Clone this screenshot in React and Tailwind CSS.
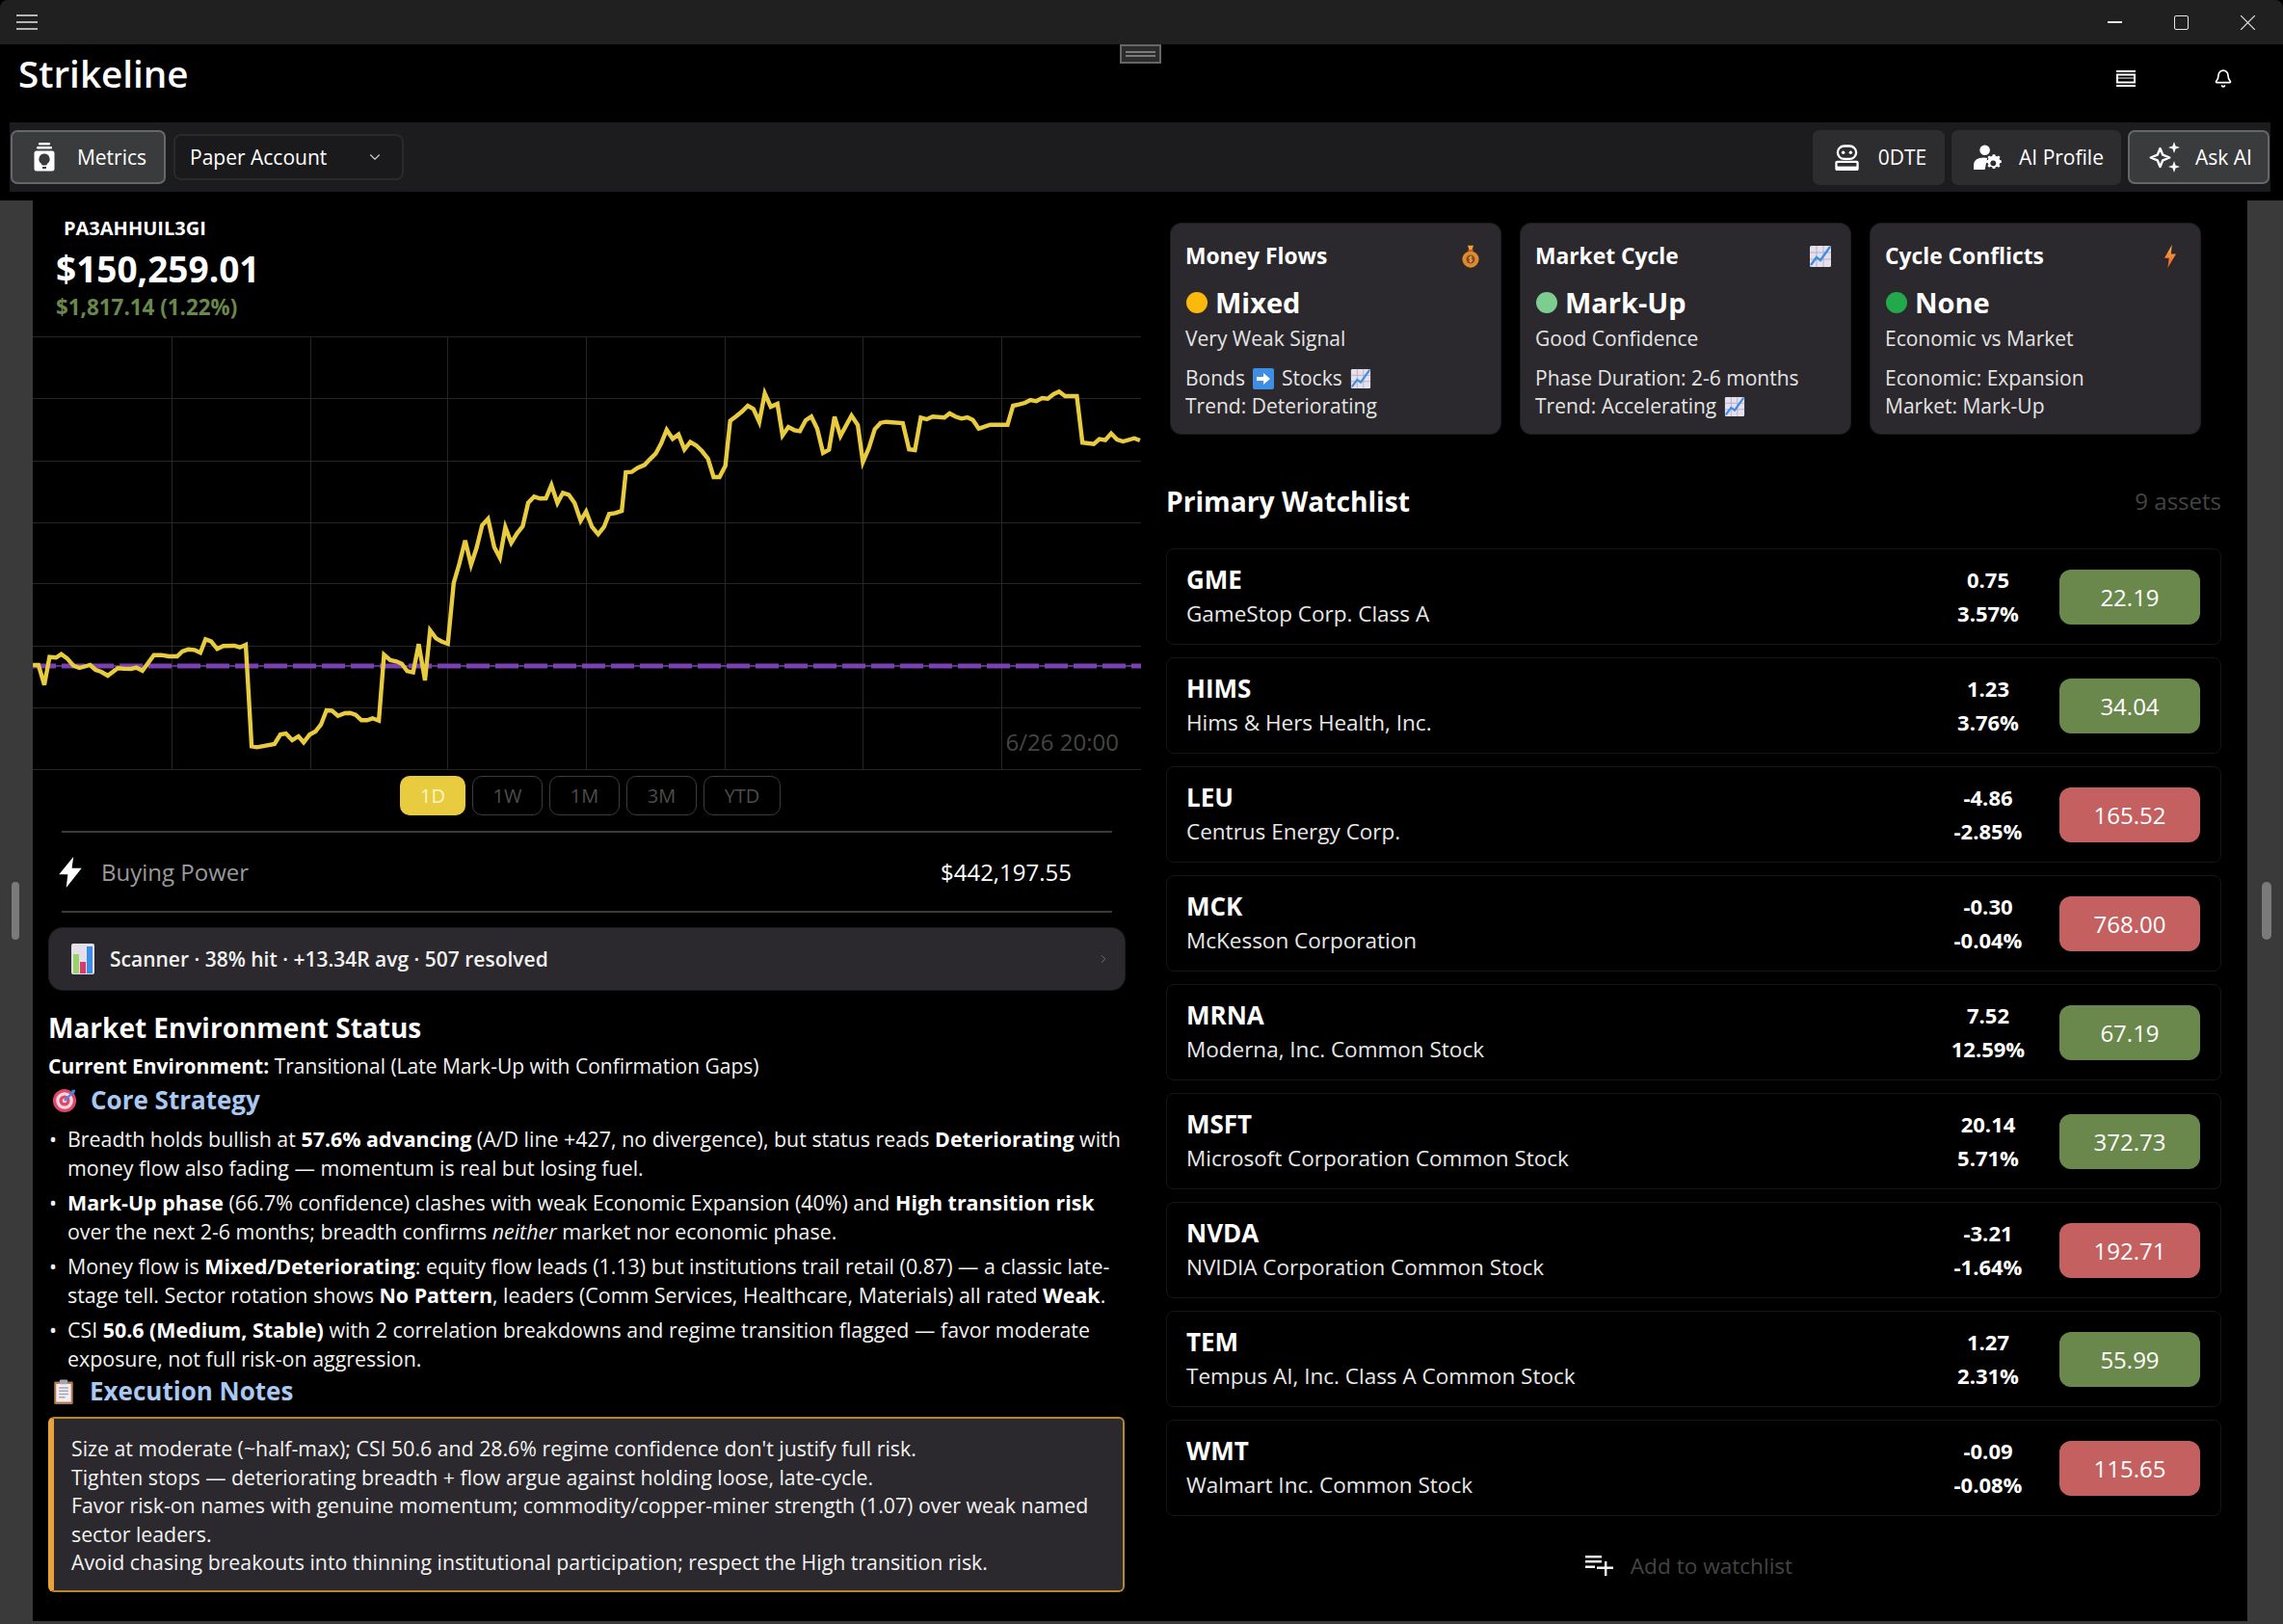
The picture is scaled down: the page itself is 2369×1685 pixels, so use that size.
import { ChevronDown, ChevronRight, Bell } from "lucide-react";

const FONT = "font-['Open_Sans','Noto_Sans',sans-serif]";

const leftPts = [[37,1050],[52,1050],[68,1112],[82,1025],[100,1027],[114,1016],[130,1030],[147,1052],[163,1059],[192,1050],[207,1065],[222,1071],[240,1083],[267,1060],[283,1061],[303,1062],[318,1058],[334,1068],[365,1019],[385,1019],[405,1023],[428,1023],[442,1008],[458,1001],[475,1003],[491,1012],[505,970],[520,976],[537,1000],[553,991],[583,990],[598,995],[614,987],[630,1303],[645,1306],[692,1296],[708,1266],[723,1263],[740,1284],[757,1272],[771,1291],[787,1267],[803,1257],[818,1235],[833,1191],[848,1192],[864,1208],[883,1200],[897,1199],[912,1205],[928,1222],[943,1222],[958,1216],[975,1223],[989,1018],[1006,1035],[1023,1039],[1037,1046],[1052,1069],[1068,1073],[1083,985],[1100,1098],[1114,942],[1130,967],[1146,977],[1162,984],[1178,795],[1193,735],[1209,662],[1225,738],[1240,685],[1255,615],[1271,595],[1288,683],[1303,716],[1318,621],[1334,670],[1350,640],[1365,618],[1380,545],[1396,526],[1412,532],[1428,531],[1443,490],[1459,546],[1474,514],[1490,520],[1506,546],[1522,601],[1537,572],[1553,620]];
const rightPts = [[54,643],[70,620],[84,580],[100,577],[118,570],[129,450],[145,449],[160,437],[180,427],[195,409],[210,392],[225,360],[240,318],[256,346],[272,332],[288,379],[304,356],[320,367],[336,385],[352,408],[367,465],[383,465],[399,430],[412,290],[428,276],[444,261],[460,243],[475,253],[491,293],[506,205],[522,246],[540,237],[554,335],[570,309],[586,319],[601,322],[617,288],[632,277],[648,314],[664,390],[680,380],[695,277],[711,337],[741,274],[758,303],[772,418],[788,375],[804,316],[820,296],[835,293],[880,297],[897,379],[913,381],[929,280],[945,285],[961,277],[993,280],[1007,267],[1023,277],[1039,283],[1055,279],[1070,287],[1086,314],[1117,302],[1164,302],[1179,243],[1195,239],[1211,234],[1226,225],[1242,229],[1258,219],[1273,221],[1289,207],[1304,199],[1320,213],[1352,213],[1367,358],[1398,362],[1413,347],[1429,350],[1445,329],[1461,348],[1477,354],[1508,344],[1523,351]];

const linePts = [
    ...leftPts.map(([x, y]) => [20 + x / 2.613 - 34, (y - 27) / 3]),
    ...rightPts.map(([x, y]) => [600 + x / 2.613 - 34, (y - 27) / 3]),
]
    .map(([x, y]) => `${x.toFixed(1)},${y.toFixed(1)}`)
    .join(" ");

const gridY = [0, 64, 129, 193, 256, 321, 385, 449];
const gridX = [144, 288, 430, 574, 718, 861, 1005];

const watchlist = [
    { s: "GME", n: "GameStop Corp. Class A", c: "0.75", p: "3.57%", v: "22.19", up: true },
    { s: "HIMS", n: "Hims & Hers Health, Inc.", c: "1.23", p: "3.76%", v: "34.04", up: true },
    { s: "LEU", n: "Centrus Energy Corp.", c: "-4.86", p: "-2.85%", v: "165.52", up: false },
    { s: "MCK", n: "McKesson Corporation", c: "-0.30", p: "-0.04%", v: "768.00", up: false },
    { s: "MRNA", n: "Moderna, Inc. Common Stock", c: "7.52", p: "12.59%", v: "67.19", up: true },
    { s: "MSFT", n: "Microsoft Corporation Common Stock", c: "20.14", p: "5.71%", v: "372.73", up: true },
    { s: "NVDA", n: "NVIDIA Corporation Common Stock", c: "-3.21", p: "-1.64%", v: "192.71", up: false },
    { s: "TEM", n: "Tempus AI, Inc. Class A Common Stock", c: "1.27", p: "2.31%", v: "55.99", up: true },
    { s: "WMT", n: "Walmart Inc. Common Stock", c: "-0.09", p: "-0.08%", v: "115.65", up: false },
];

function ChartEmoji({ className }) {
    return (
        <svg viewBox="0 0 24 24" className={className}>
            <rect x="1" y="1" width="22" height="22" rx="1.5" fill="#e6e0ee" />
            <path d="M1 8h22M1 15h22M8 1v22M15 1v22" stroke="#b7aec6" strokeWidth="1" />
            <path d="M2 21l6-8 4 3L22 2" stroke="#3f8fe0" strokeWidth="2.4" fill="none" />
        </svg>
    );
}

function MoneyBag({ className }) {
    return (
        <svg viewBox="0 0 24 32" className={className}>
            <path d="M8 1h8l-2 6h-4z" fill="#f0a43a" />
            <rect x="8.5" y="6.5" width="7" height="2.5" fill="#c9651f" />
            <ellipse cx="12" cy="20" rx="11.5" ry="11.5" fill="#e08a2e" />
            <circle cx="12" cy="20" r="6" fill="#8a4a1c" />
            <path d="M14 17.5c-2-1.2-4-.6-4 .8 0 2.4 4 1 4 3.4 0 1.4-2 1.8-4 .8M12 15.5v9" stroke="#f4c46c" strokeWidth="1.2" fill="none" />
        </svg>
    );
}

function FlashEmoji({ className }) {
    return (
        <svg viewBox="0 0 16 28" className={className}>
            <defs>
                <linearGradient id="flashg" x1="0" y1="0" x2="0" y2="1">
                    <stop offset="0" stopColor="#fbb040" />
                    <stop offset="1" stopColor="#ee5a2a" />
                </linearGradient>
            </defs>
            <path d="M10 0L1 16h5.5L5 28l10-17H9z" fill="url(#flashg)" />
        </svg>
    );
}

function ArrowEmoji({ className }) {
    return (
        <svg viewBox="0 0 22 24" className={className}>
            <rect x="0" y="1" width="22" height="22" rx="2" fill="#3f8ee6" />
            <path d="M4 10h7V6l7 6-7 6v-4H4z" fill="#fff" />
        </svg>
    );
}

function BarsEmoji({ className }) {
    return (
        <svg viewBox="0 0 24 32" className={className}>
            <rect x="0" y="0" width="24" height="32" rx="2" fill="#e4e0ea" />
            <rect x="2" y="11" width="6" height="20" fill="#9ad16a" />
            <rect x="9" y="19" width="6" height="12" fill="#d83c6a" />
            <rect x="16" y="3" width="6" height="28" fill="#3f8ee6" />
        </svg>
    );
}

function TargetEmoji({ className }) {
    return (
        <svg viewBox="0 0 28 28" className={className}>
            <circle cx="14" cy="14" r="13" fill="#e0476a" />
            <circle cx="14" cy="14" r="9.5" fill="#f3d9df" />
            <circle cx="14" cy="14" r="6" fill="#e0476a" />
            <circle cx="14" cy="14" r="2.5" fill="#f3d9df" />
            <path d="M14 14L24 4" stroke="#3f8ee6" strokeWidth="2.4" />
            <path d="M22 2l4 0-1 4-3 1z" fill="#3f8ee6" />
        </svg>
    );
}

function ClipboardEmoji({ className }) {
    return (
        <svg viewBox="0 0 24 32" className={className}>
            <rect x="0" y="3" width="24" height="29" rx="1.5" fill="#b07a52" />
            <rect x="2.5" y="6" width="19" height="23" fill="#f1edf3" />
            <rect x="7" y="0.5" width="10" height="6" rx="1" fill="#a8a4b0" />
            <path d="M6 11h12M6 15h12M6 19h12M6 23h8" stroke="#a8a4b0" strokeWidth="1.8" />
        </svg>
    );
}

function MetricsIcon({ className }) {
    return (
        <svg viewBox="0 0 22 30" className={className} fill="#fff">
            <rect x="5" y="0" width="12" height="2.4" rx="1" />
            <rect x="3" y="4" width="16" height="2.4" rx="1" />
            <path d="M3 8.5h16a2.5 2.5 0 012.5 2.5v16a2.5 2.5 0 01-2.5 2.5H3A2.5 2.5 0 01.5 27V11A2.5 2.5 0 013 8.5z" />
            <path d="M11 11.5a5.6 5.6 0 00-3.2 10.2l1 1.8h4.4l1-1.8A5.6 5.6 0 0011 11.5z" fill="#3a3a3c" />
            <rect x="9" y="25" width="4" height="2" fill="#3a3a3c" />
        </svg>
    );
}

function RobotIcon({ className }) {
    return (
        <svg viewBox="0 0 26 28" className={className} fill="none" stroke="#fff" strokeWidth="2.4">
            <rect x="3" y="1.5" width="20" height="14" rx="7" />
            <circle cx="9" cy="8.5" r="1.8" fill="#fff" stroke="none" />
            <circle cx="17" cy="8.5" r="1.8" fill="#fff" stroke="none" />
            <rect x="1.5" y="18.5" width="23" height="8.5" rx="1" />
            <path d="M1.5 25h23" strokeWidth="3" />
        </svg>
    );
}

function ProfileIcon({ className }) {
    return (
        <svg viewBox="0 0 32 28" className={className} fill="#fff">
            <circle cx="13" cy="6" r="5.5" />
            <path d="M1 27v-5c0-5 4-8 11-8 1.5 0 2.6.2 3.6.5L13 27z" />
            <path d="M22 12.5h3l.5 2.2 1.9.8 2-1.2 2 2-1.2 2 .8 1.9 2 .5v3l-2 .5-.8 1.9 1.2 2-2 2-2-1.2-1.9.8-.5 2h-3l-.5-2-1.9-.8-2 1.2-2-2 1.2-2-.8-1.9-2.2-.5v-3l2.2-.5.8-1.9-1.2-2 2-2 2 1.2 1.9-.8z" transform="translate(2.5 0.5) scale(0.86 0.8)" />
            <circle cx="22" cy="20" r="3" fill="#2d2d2f" />
        </svg>
    );
}

function AskIcon({ className }) {
    return (
        <svg viewBox="0 0 32 32" className={className} fill="none" stroke="#fff">
            <path d="M11.5 7l2.8 6.7 7 2.8-7 2.8-2.8 6.7-2.8-6.7-7-2.8 7-2.8z" strokeWidth="2.4" strokeLinejoin="round" />
            <path d="M26 0l1.5 4.5L32 6l-4.5 1.5L26 12l-1.5-4.5L20 6l4.5-1.5z" fill="#fff" stroke="none" />
            <path d="M26 20l1.5 4.5L32 26l-4.5 1.5L26 32l-1.5-4.5L20 26l4.5-1.5z" fill="#fff" stroke="none" />
        </svg>
    );
}

function TabletIcon({ className }) {
    return (
        <svg viewBox="0 0 20 17" className={className} fill="none" stroke="#fff" strokeWidth="2">
            <path d="M0 1h20M0 16h20" />
            <rect x="1" y="4.5" width="18" height="8" />
            <path d="M2 8h16" strokeWidth="1" />
        </svg>
    );
}

function BoltIcon({ className }) {
    return (
        <svg viewBox="0 0 24 30" className={className} fill="#fff">
            <path d="M15 0L1 17h8.5L8 30l15-19h-9.5z" />
        </svg>
    );
}

function AddListIcon({ className }) {
    return (
        <svg viewBox="0 0 29 21" className={className} fill="#fff">
            <rect x="0" y="0" width="17" height="2.4" />
            <rect x="0" y="5" width="17" height="2.4" />
            <rect x="0" y="10.5" width="10" height="2.4" />
            <rect x="12" y="11.5" width="17" height="2.4" />
            <rect x="20" y="6" width="2.4" height="15" />
        </svg>
    );
}

function ToolButton({ icon, label, active, w, gap }) {
    return (
        <div className={`flex items-center justify-center rounded-[7px] pl-[4px] text-[21px] text-white ${gap} ${active ? "h-[56px] border-2 border-[#66676a] bg-[#3a3b3d]" : "h-[57px] bg-[#2d2d2f]"} ${w}`}>
            {icon}
            <span className="pt-[1px]">{label}</span>
        </div>
    );
}

function InfoCard({ title, icon, dot, status, sub, lines }) {
    return (
        <div className="h-[218px] w-[342px] rounded-[11px] bg-[#2b292d] px-[15px] pt-[21px] shadow-[0_0_0_1px_#1d1c1f]">
            <div className="flex h-[26px] items-center justify-between">
                <span className="text-[22.8px] font-bold text-white">{title}</span>
                {icon}
            </div>
            <div className="mt-[18px] flex h-[34px] items-center gap-[8px]">
                <span className={`ml-[1px] h-[22px] w-[22px] rounded-full ${dot}`} />
                <span className="text-[29px] font-bold text-white">{status}</span>
            </div>
            <div className="mt-[6px] text-[21px] leading-[29px] text-[#e4e4e4]">{sub}</div>
            <div className="mt-[12px] text-[21px] leading-[29px] text-[#e4e4e4]">{lines}</div>
        </div>
    );
}

function WatchRow({ r }) {
    return (
        <div className="flex h-[100px] items-center rounded-[8px] border border-[#161617] pl-[20px] pr-[21px]">
            <div className="flex-1">
                <div className="text-[26px] font-bold leading-[35px] text-white">{r.s}</div>
                <div className="text-[22.5px] leading-[35px] text-[#e8e8e8]">{r.n}</div>
            </div>
            <div className="w-[120px] text-center text-[22px] font-bold leading-[35px] text-white">
                <div>{r.c}</div>
                <div>{r.p}</div>
            </div>
            <div className={`ml-[14px] flex h-[57px] w-[146px] items-center justify-center rounded-[12px] pt-[2px] text-[24px] text-white ${r.up ? "bg-[#6a884c]" : "bg-[#c46060]"}`}>
                {r.v}
            </div>
        </div>
    );
}

function Bullet({ children }) {
    return (
        <li className="flex">
            <span className="w-[20px] shrink-0 pl-[1px]">•</span>
            <span>{children}</span>
        </li>
    );
}

export default function App() {
    return (
        <div className={`flex h-[1685px] w-[2369px] flex-col overflow-hidden bg-black text-white ${FONT}`}>
            {/* title bar */}
            <div className="flex h-[46px] items-center justify-between rounded-t-[8px] bg-[#202020] pl-[17px]">
                <svg viewBox="0 0 22 16" className="h-[16px] w-[22px]" stroke="#e6e6e6" strokeWidth="1.4">
                    <path d="M0 1h22M0 8h22M0 15h22" />
                </svg>
                <div className="flex items-center">
                    <div className="h-[1.5px] w-[15px] bg-[#e6e6e6]" />
                    <div className="ml-[54px] h-[15px] w-[15px] rounded-[2px] border-[1.5px] border-[#e6e6e6]" />
                    <svg viewBox="0 0 15 15" className="ml-[54px] mr-[29px] h-[15px] w-[15px]" stroke="#e6e6e6" strokeWidth="1.2">
                        <path d="M0 0l15 15M15 0L0 15" />
                    </svg>
                </div>
            </div>

            {/* app header */}
            <div className="relative flex h-[81px] items-start justify-between pl-[19px]">
                <div className="pt-[4px] text-[38.6px] font-semibold leading-[52px]">Strikeline</div>
                <div className="absolute left-[1162px] top-[0px] flex h-[20px] w-[43px] items-center justify-center border-2 border-[#666666] bg-[#2b2b2b]">
                    <div className="h-[6px] w-[31px] border-y-2 border-[#7a7a7a]" />
                </div>
                <div className="flex items-center gap-[81px] pr-[52px] pt-[24px]">
                    <TabletIcon className="h-[17px] w-[20px]" />
                    <Bell className="h-[23px] w-[20px]" strokeWidth={2} />
                </div>
            </div>

            {/* toolbar */}
            <div className="ml-[10px] mr-[13px] flex h-[72px] items-center justify-between bg-[#1c1c1e]">
                <div className="flex items-center gap-[8px] pl-[1px]">
                    <ToolButton active w="w-[161px]" gap="gap-[23px]" label="Metrics" icon={<MetricsIcon className="h-[30px] w-[22px]" />} />
                    <div className="flex h-[48px] w-[239px] items-center justify-between rounded-[8px] border-2 border-[#2a2a2c] bg-[#1a1a1c] pl-[15px] pr-[19px] text-[21px]">
                        <span className="pt-[1px]">Paper Account</span>
                        <ChevronDown className="h-[18px] w-[18px] text-[#cccccc]" strokeWidth={1.5} />
                    </div>
                </div>
                <div className="flex items-center gap-[7px] pr-[1px]">
                    <ToolButton w="w-[137px]" gap="gap-[20px]" label="0DTE" icon={<RobotIcon className="h-[27px] w-[25px]" />} />
                    <ToolButton w="w-[176px]" gap="gap-[17px]" label="AI Profile" icon={<ProfileIcon className="h-[27px] w-[31px]" />} />
                    <ToolButton active w="w-[147px]" gap="gap-[16px]" label="Ask AI" icon={<AskIcon className="h-[32px] w-[32px]" />} />
                </div>
            </div>

            {/* main */}
            <div className="mt-[9px] flex min-h-0 flex-1 flex-col">
                <div className="flex min-h-0 flex-1">
                    <div className="relative w-[34px] bg-[#3a3a3a]">
                        <div className="absolute left-[12px] top-[707px] h-[60px] w-[8px] rounded-full bg-[#7a7a7a]" />
                    </div>

                    <div className="flex min-w-0 flex-1">
                        {/* left column */}
                        <div className="w-[1150px] shrink-0">
                            <div className="pl-[32px] pt-[16px] text-[20px] font-bold leading-[26px]">PA3AHHUIL3GI</div>
                            <div className="mt-[3px] pl-[24px] text-[37px] font-bold leading-[52px]">$150,259.01</div>
                            <div className="pl-[24px] text-[22.4px] font-bold leading-[28px] text-[#6a884c]">$1,817.14 (1.22%)</div>

                            <div className="relative mt-[16px] h-[450px] w-[1150px]">
                                <svg viewBox="0 0 1150 450" className="absolute inset-0 h-[450px] w-[1150px]">
                                    {gridY.map((y) => (
                                        <line key={y} x1="0" x2="1150" y1={y + 0.5} y2={y + 0.5} stroke="#262626" strokeWidth="1" />
                                    ))}
                                    {gridX.map((x) => (
                                        <line key={x} y1="0" y2="450" x1={x + 0.5} x2={x + 0.5} stroke="#262626" strokeWidth="1" />
                                    ))}
                                    <line x1="0" x2="1150" y1="342" y2="342" stroke="#7b41b3" strokeWidth="1.5" />
                                    <line x1="0" x2="1150" y1="342" y2="342" stroke="#7b41b3" strokeWidth="5" strokeDasharray="24 6" />
                                    <polyline points={linePts} fill="none" stroke="#e8cb3e" strokeWidth="4.4" strokeLinejoin="miter" />
                                </svg>
                                <div className="absolute right-[23px] top-[405px] text-[24px] leading-[32px] text-[#454545]">6/26 20:00</div>
                            </div>

                            <div className="mt-[6px] flex justify-center gap-[7px] pl-[7px] text-[20px]">
                                <div className="flex h-[41px] w-[68px] items-center justify-center rounded-[10px] bg-[#e8cb3e] text-[#fff6c8]">1D</div>
                                {["1W", "1M", "3M"].map((t) => (
                                    <div key={t} className="flex h-[41px] w-[73px] items-center justify-center rounded-[10px] border border-[#3c3c3c] text-[#4d4d4d]">{t}</div>
                                ))}
                                <div className="flex h-[41px] w-[80px] items-center justify-center rounded-[10px] border border-[#3c3c3c] text-[#4d4d4d]">YTD</div>
                            </div>

                            <div className="mx-[30px] mt-[16px] flex h-[85px] items-center border-y-2 border-[#3a3a3a] text-[24px]">
                                <BoltIcon className="ml-[-4px] h-[32px] w-[26px]" />
                                <span className="ml-[19px] text-[#9a9a9a]">Buying Power</span>
                                <span className="ml-auto mr-[42px] text-[24px]">$442,197.55</span>
                            </div>

                            <div className="ml-[17px] mr-[17px] mt-[16px] flex h-[64px] items-center rounded-[14px] bg-[#2b292d] pl-[23px] pr-[15px] shadow-[0_0_0_1px_#1d1c1f]">
                                <BarsEmoji className="h-[32px] w-[24px]" />
                                <span className="ml-[16px] flex-1 text-[21px] font-semibold leading-none text-[#f2f2f2]">Scanner · 38% hit · +13.34R avg · 507 resolved</span>
                                <ChevronRight className="h-[18px] w-[14px] text-[#777777]" strokeWidth={1.5} />
                            </div>

                            <div className="pl-[16px] pr-[17px]">
                                <div className="mt-[20px] text-[28px] font-bold leading-[38px]">Market Environment Status</div>
                                <div className="mt-[6px] text-[21px] leading-[30px] text-[#f2f2f2]">
                                    <b className="font-bold text-white">Current Environment:</b> Transitional (Late Mark-Up with Confirmation Gaps)
                                </div>
                                <div className="mt-[2px] flex h-[37px] items-center pl-[4px] text-[26px] font-bold text-[#a9c8f2]">
                                    <TargetEmoji className="h-[28px] w-[26px]" />
                                    <span className="ml-[14px]">Core Strategy</span>
                                </div>
                                <ul className="mt-[7px] flex flex-col gap-[6px] text-[21.4px] leading-[30px] text-[#f2f2f2]">
                                    <Bullet>Breadth holds bullish at <b className="font-bold text-white">57.6% advancing</b> (A/D line +427, no divergence), but status reads <b className="font-bold text-white">Deteriorating</b> with money flow also fading — momentum is real but losing fuel.</Bullet>
                                    <Bullet><b className="font-bold text-white">Mark-Up phase</b> (66.7% confidence) clashes with weak Economic Expansion (40%) and <b className="font-bold text-white">High transition risk</b> over the next 2-6 months; breadth confirms <i>neither</i> market nor economic phase.</Bullet>
                                    <Bullet>Money flow is <b className="font-bold text-white">Mixed/Deteriorating</b>: equity flow leads (1.13) but institutions trail retail (0.87) — a classic late-stage tell. Sector rotation shows <b className="font-bold text-white">No Pattern</b>, leaders (Comm Services, Healthcare, Materials) all rated <b className="font-bold text-white">Weak</b>.</Bullet>
                                    <Bullet>CSI <b className="font-bold text-white">50.6 (Medium, Stable)</b> with 2 correlation breakdowns and regime transition flagged — favor moderate exposure, not full risk-on aggression.</Bullet>
                                </ul>
                                <div className="flex h-[37px] items-center pl-[5px] text-[26px] font-bold text-[#a9c8f2]">
                                    <ClipboardEmoji className="h-[26px] w-[22px]" />
                                    <span className="ml-[16px]">Execution Notes</span>
                                </div>
                                <div className="mt-[8px] h-[182px] rounded-[6px] border-2 border-l-[6px] border-[#b8862f] border-l-[#e8a33d] bg-[#2b292d] pl-[18px] pr-[20px] pt-[16px] text-[21.3px] leading-[29.5px] text-[#f2f2f2]">
                                    <div>Size at moderate (~half-max); CSI 50.6 and 28.6% regime confidence don't justify full risk.</div>
                                    <div>Tighten stops — deteriorating breadth + flow argue against holding loose, late-cycle.</div>
                                    <div>Favor risk-on names with genuine momentum; commodity/copper-miner strength (1.07) over weak named sector leaders.</div>
                                    <div>Avoid chasing breakouts into thinning institutional participation; respect the High transition risk.</div>
                                </div>
                            </div>
                        </div>

                        {/* right column */}
                        <div className="ml-[26px] min-w-0 flex-1 pr-[27px]">
                            <div className="ml-[5px] mt-[24px] flex gap-[21px]">
                                <InfoCard
                                    title="Money Flows"
                                    icon={<MoneyBag className="mr-[5px] h-[24px] w-[22px]" />}
                                    dot="bg-[#fdb90b]"
                                    status="Mixed"
                                    sub="Very Weak Signal"
                                    lines={
                                        <>
                                            <div className="flex items-center gap-[8px]">Bonds <ArrowEmoji className="h-[24px] w-[22px]" /> Stocks <ChartEmoji className="h-[24px] w-[22px]" /></div>
                                            <div>Trend: Deteriorating</div>
                                        </>
                                    }
                                />
                                <InfoCard
                                    title="Market Cycle"
                                    icon={<ChartEmoji className="mr-[4px] h-[24px] w-[24px]" />}
                                    dot="bg-[#7ccd8f]"
                                    status="Mark-Up"
                                    sub="Good Confidence"
                                    lines={
                                        <>
                                            <div>Phase Duration: 2-6 months</div>
                                            <div className="flex items-center gap-[8px]">Trend: Accelerating <ChartEmoji className="h-[24px] w-[22px]" /></div>
                                        </>
                                    }
                                />
                                <InfoCard
                                    title="Cycle Conflicts"
                                    icon={<FlashEmoji className="mr-[9px] h-[24px] w-[14px]" />}
                                    dot="bg-[#22a94b]"
                                    status="None"
                                    sub="Economic vs Market"
                                    lines={
                                        <>
                                            <div>Economic: Expansion</div>
                                            <div>Market: Mark-Up</div>
                                        </>
                                    }
                                />
                            </div>

                            <div className="mt-[50px] flex h-[40px] items-center justify-between">
                                <span className="text-[28.2px] font-bold">Primary Watchlist</span>
                                <span className="text-[24px] text-[#444444]">9 assets</span>
                            </div>

                            <div className="mt-[29px] flex flex-col gap-[13px]">
                                {watchlist.map((r) => (
                                    <WatchRow key={r.s} r={r} />
                                ))}
                            </div>

                            <div className="mt-[35px] flex items-center justify-center gap-[18px] pr-[10px] text-[22.6px] text-[#444444]">
                                <AddListIcon className="h-[21px] w-[29px]" />
                                <span>Add to watchlist</span>
                            </div>
                        </div>
                    </div>

                    <div className="relative w-[37px] bg-[#3a3a3a]">
                        <div className="absolute left-[15px] top-[707px] h-[60px] w-[10px] rounded-full bg-[#7a7a7a]" />
                    </div>
                </div>
                <div className="h-[3px] bg-[#3a3a3a]" />
            </div>
        </div>
    );
}
